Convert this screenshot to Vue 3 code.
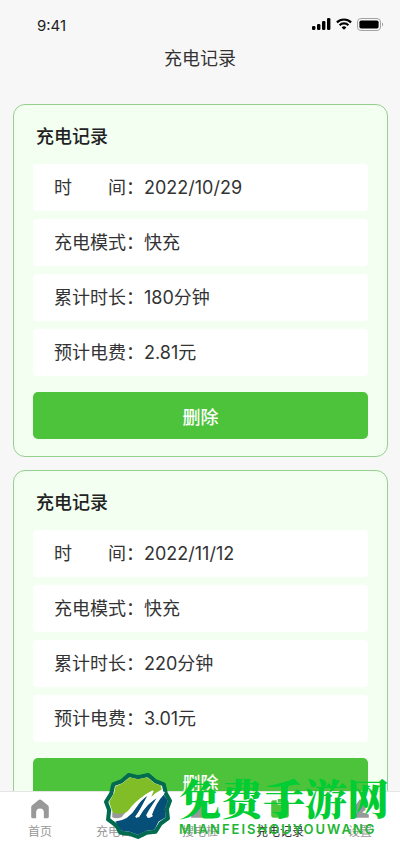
<template>
  <div class="page">
    <header class="header">
      <div class="status">
        <span class="status__time">9:41</span>
        <div class="status__icons">
          <svg class="icon-signal" viewBox="0 0 19 12" fill="#000">
            <rect x="0" y="8" width="3.4" height="4" rx="1.2" />
            <rect x="5" y="6" width="3.4" height="6" rx="1.2" />
            <rect x="10" y="3" width="3.4" height="9" rx="1.2" />
            <rect x="15" y="0" width="3.4" height="12" rx="1.2" />
          </svg>
          <svg class="icon-wifi" viewBox="0 0 16 12" fill="none" stroke="#000" stroke-width="2.2">
            <path d="M0.9 4.4a10.2 10.2 0 0 1 14.2 0" />
            <path d="M3.6 7.2a6.3 6.3 0 0 1 8.8 0" />
            <path d="M8 11.8 5.6 9.4a3.4 3.4 0 0 1 4.8 0z" fill="#000" stroke="none" />
          </svg>
          <svg class="icon-battery" viewBox="0 0 27 13" fill="none">
            <rect x="0.5" y="0.5" width="23" height="12" rx="3.5" stroke="#a3a3a3" />
            <rect x="2.4" y="2.4" width="19.2" height="8.2" rx="1.8" fill="#000" />
            <path d="M25 4.6v3.8c1.6-.6 1.6-3.2 0-3.8z" fill="#a3a3a3" />
          </svg>
        </div>
      </div>
      <h1 class="header__title">充电记录</h1>
    </header>

    <main class="list">
      <section class="card" v-for="record in records" :key="record.id">
        <h2 class="card__title">充电记录</h2>
        <dl class="card__rows">
          <div class="row" v-for="row in record.rows" :key="row.label">
            <dt class="row__label">{{ row.label }}：</dt>
            <dd class="row__value">{{ row.value }}</dd>
          </div>
        </dl>
        <button class="card__button" type="button" @click="remove(record.id)">删除</button>
      </section>
    </main>

    <nav class="tabbar">
      <a
        v-for="tab in tabs"
        :key="tab.name"
        href="#"
        class="tab"
        :class="{ 'tab--active': tab.name === active }"
        @click.prevent="active = tab.name"
      >
        <svg class="tab__icon" viewBox="0 0 20 20" fill="currentColor">
          <path :d="tab.icon" fill-rule="evenodd" />
        </svg>
        <span class="tab__label">{{ tab.label }}</span>
      </a>
    </nav>

    <div class="watermark">
      <svg class="watermark__logo" viewBox="0 0 66 66">
        <path d="M24 3 33 5 43 3 50 9 58 12 60 21 64 28 61 36 62 45 55 50 50 58 41 59 33 63 25 60 16 59 12 52 4 46 5 37 2 29 7 21 9 12 17 9z" fill="#fff" stroke="#006b4f" stroke-width="4" stroke-linejoin="round" />
        <path d="M10 20 11 14 18 11 25 5 33 7 42 5 49 11 55 13 56 17Q50 20 46 24L48 18Q38 22 30 31 22 41 14 42 9 42 8 38L5 29z" fill="#80bd27" />
        <path d="M8 39Q14 42 21 39L17 44Q12 46 8 44z" fill="#999" />
        <path d="M11 48Q24 47 31 35 36 27 42 23L31 44 34 44Q42 30 51 25L42 43Q42 46 46 43 51 29 58 22L62 28 59 36 60 44 53 48 49 56 41 57 33 61 25 58 17 57z" fill="#064f78" />
        <path d="M21 43Q28 32 35 27 41 22 47 19L32 43" fill="none" stroke="#fff" stroke-width="2" stroke-linejoin="round" />
        <path d="M31 44Q42 28 58 20 48 30 42 42 43 45 47 42" fill="none" stroke="#fff" stroke-width="2" stroke-linejoin="round" />
      </svg>
      <div class="watermark__text">
        <span class="watermark__name">免费手游网</span>
        <span class="watermark__site">MIANFEISHOUYOUWANG</span>
      </div>
    </div>
  </div>
</template>

<script setup>
import { ref } from 'vue'

const records = ref([
  {
    id: 1,
    rows: [
      { label: '时　　间', value: '2022/10/29' },
      { label: '充电模式', value: '快充' },
      { label: '累计时长', value: '180分钟' },
      { label: '预计电费', value: '2.81元' },
    ],
  },
  {
    id: 2,
    rows: [
      { label: '时　　间', value: '2022/11/12' },
      { label: '充电模式', value: '快充' },
      { label: '累计时长', value: '220分钟' },
      { label: '预计电费', value: '3.01元' },
    ],
  },
])

const active = ref('record')

const tabs = [
  {
    name: 'home',
    label: '首页',
    icon: 'M8.7 1.9a2 2 0 0 1 2.6 0l6 5a2 2 0 0 1 .7 1.5V17a1.5 1.5 0 0 1-1.5 1.5h-3V13a3.5 3.5 0 0 0-7 0v5.5h-3A1.5 1.5 0 0 1 2 17V8.4a2 2 0 0 1 .7-1.5z',
  },
  {
    name: 'guide',
    label: '充电日程',
    icon: 'M3 3h14v12H3zM6 17h8v2H6z',
  },
  {
    name: 'pile',
    label: '搜电桩',
    icon: 'M6 2h8v9l3 4h1v3H2v-3h1l3-4z',
  },
  {
    name: 'record',
    label: '充电记录',
    icon: 'M4 2h3v2q0 2 2 2h2q2 0 2-2V2h3a2 2 0 0 1 2 2v12a2 2 0 0 1-2 2H4a2 2 0 0 1-2-2V4a2 2 0 0 1 2-2zM8 1h4v3H8z',
  },
  {
    name: 'setting',
    label: '设置',
    icon: 'M10 1 15 8v3l-3 2 6 2v3H2v-3l6-2-3-2V8z',
  },
]

function remove(id) {
  records.value = records.value.filter((record) => record.id !== id)
}
</script>

<style>
body {
  background: #f7f7f7;
}
</style>

<style scoped>
.page {
  height: 100vh;
  display: flex;
  flex-direction: column;
  position: relative;
  overflow: hidden;
  background: #f7f7f7;
  color: #333;
  font-family: Inter, "Noto Sans CJK SC", sans-serif;
}

.header {
  flex: none;
}

.status {
  display: flex;
  align-items: center;
  justify-content: space-between;
  padding: 16px 16px 0 37px;
  height: 20px;
}

.status__time {
  font-size: 15px;
  line-height: 20px;
  color: #222;
}

.status__icons {
  display: flex;
  align-items: center;
  gap: 5px;
  padding-bottom: 4px;
}

.icon-signal {
  width: 19px;
  height: 12px;
}

.icon-wifi {
  width: 16px;
  height: 12px;
}

.icon-battery {
  width: 27px;
  height: 13px;
}

.header__title {
  margin: 0;
  padding: 9px 0 0;
  font-size: 18px;
  font-weight: 400;
  line-height: 28px;
  text-align: center;
}

.list {
  flex: 1;
  min-height: 0;
  overflow: hidden;
  padding: 31px 12px 0 13px;
}

.card {
  margin-bottom: 13px;
  padding: 18px 19px 17px;
  border: 1px solid #95d08f;
  border-radius: 12px;
  background: #f2fff1;
}

.card__title {
  margin: 0 0 14px 3px;
  font-size: 18px;
  font-weight: 500;
  line-height: 27px;
  color: #222;
}

.card__rows {
  display: grid;
  gap: 8px;
  margin: 0 0 16px;
}

.row {
  display: flex;
  align-items: baseline;
  padding: 0 21px;
  border-radius: 4px;
  background: #fff;
  font-size: 18px;
  line-height: 47px;
}

.row__label,
.row__value {
  margin: 0;
}

.card__button {
  display: block;
  width: 100%;
  height: 47px;
  padding: 0;
  border: 0;
  border-radius: 5px;
  background: #4dc33b;
  color: #fff;
  font-family: inherit;
  font-size: 18px;
  font-weight: 500;
  cursor: pointer;
}

.tabbar {
  flex: none;
  display: flex;
  height: 52px;
  border-top: 1px solid #e5e5e5;
  background: #fff;
}

.tab {
  flex: 1;
  display: flex;
  flex-direction: column;
  align-items: center;
  padding-top: 6px;
  color: #999;
  text-decoration: none;
}

.tab__icon {
  width: 22px;
  height: 22px;
}

.tab__label {
  margin-top: 3px;
  font-size: 12px;
  line-height: 18px;
}

.tab--active .tab__icon {
  color: #4dc33b;
}

.tab--active .tab__label {
  color: #333;
}

/* 盖在底部导航上的水印 */
.watermark {
  position: absolute;
  right: 11px;
  bottom: 4px;
  display: flex;
  align-items: flex-end;
  gap: 7px;
  pointer-events: none;
}

.watermark__logo {
  width: 68px;
  height: 68px;
}

.watermark__text {
  display: flex;
  flex-direction: column;
}

.watermark__name {
  font-family: "Noto Serif CJK SC", "Noto Sans CJK SC", serif;
  font-size: 42px;
  font-weight: 900;
  line-height: 50px;
  color: #0c3;
}

.watermark__site {
  padding-bottom: 4px;
  font-family: Inter, sans-serif;
  font-size: 13px;
  font-weight: 600;
  line-height: 14px;
  letter-spacing: 2px;
  color: #22b534;
}
</style>
